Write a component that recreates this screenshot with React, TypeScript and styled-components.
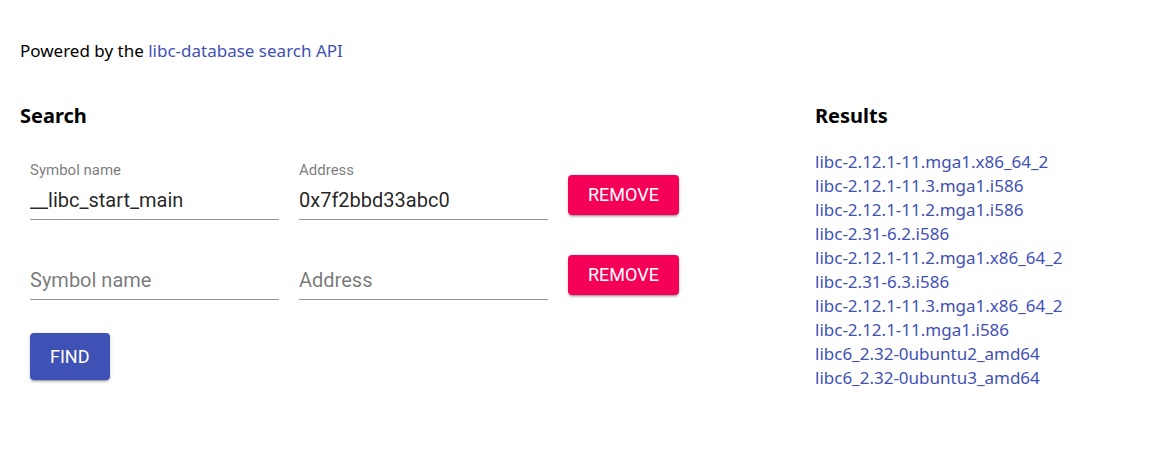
import styled, { createGlobalStyle } from 'styled-components'

const GlobalStyle = createGlobalStyle`
  body {
    margin: 0;
    background: #fff;
    font-family: 'Noto Sans', 'Open Sans', sans-serif;
    color: #000;
  }
`

const RESULTS = [
  'libc-2.12.1-11.mga1.x86_64_2',
  'libc-2.12.1-11.3.mga1.i586',
  'libc-2.12.1-11.2.mga1.i586',
  'libc-2.31-6.2.i586',
  'libc-2.12.1-11.2.mga1.x86_64_2',
  'libc-2.31-6.3.i586',
  'libc-2.12.1-11.3.mga1.x86_64_2',
  'libc-2.12.1-11.mga1.i586',
  'libc6_2.32-0ubuntu2_amd64',
  'libc6_2.32-0ubuntu3_amd64',
]

const QUERIES = [
  { symbol: '__libc_start_main', address: '0x7f2bbd33abc0' },
  { symbol: '', address: '' },
]

const Page = styled.main`
  padding: 39px 20px 20px;
`
const Intro = styled.p`
  margin: 0 0 41px;
  font-size: 17px;
  line-height: 24px;
`
const Link = styled.a`
  color: #3f51b5;
  text-decoration: none;
`
const Columns = styled.div`
  display: grid;
  grid-template-columns: 795px 1fr;
`
const Heading = styled.h2`
  margin: 0 0 22px;
  font-size: 20px;
  line-height: 24px;
  font-weight: 700;
`
const Form = styled.form`
  display: flex;
  flex-direction: column;
  align-items: flex-start;
  gap: 21px;
  padding: 11px 0 0 10px;
`
const Row = styled.div`
  display: flex;
  align-items: flex-end;
  gap: 20px;
`
const Field = styled.label`
  display: flex;
  flex-direction: column;
  width: 249px;
  font-family: Roboto, sans-serif;
`
const FieldLabel = styled.span`
  height: 18px;
  font-size: 15px;
  line-height: 18px;
  color: rgba(0, 0, 0, 0.54);
`
const Input = styled.input`
  box-sizing: border-box;
  width: 100%;
  height: 41px;
  margin: 0;
  padding: 9px 0 7px;
  border: 0;
  border-bottom: 1px solid rgba(0, 0, 0, 0.42);
  outline: none;
  background: transparent;
  font-family: Roboto, sans-serif;
  font-size: 20px;
  line-height: 24px;
  color: rgba(0, 0, 0, 0.87);
  &::placeholder {
    color: rgba(0, 0, 0, 0.54);
    opacity: 1;
  }
`
const Button = styled.button<{ $tone: 'primary' | 'secondary'; $tall?: boolean }>`
  box-sizing: border-box;
  height: ${(p) => (p.$tall ? '47px' : '40px')};
  padding: 0 20px;
  border: 0;
  border-radius: 4px;
  background: ${(p) => (p.$tone === 'primary' ? '#3f51b5' : '#f50057')};
  color: #fff;
  font-family: Roboto, sans-serif;
  font-size: 18px;
  font-weight: 400;
  line-height: 24px;
  text-transform: uppercase;
  cursor: pointer;
  box-shadow: 0 3px 1px -2px rgba(0, 0, 0, 0.2), 0 2px 2px 0 rgba(0, 0, 0, 0.14),
    0 1px 5px 0 rgba(0, 0, 0, 0.12);
`
const RemoveButton = styled(Button)`
  margin-bottom: 5px;
`
const FindButton = styled(Button)`
  margin-top: 12px;
`
const ResultList = styled.ul`
  margin: 0;
  padding: 0;
  list-style: none;
  font-size: 17px;
  line-height: 24px;
`

export default function App() {
  return (
    <>
      <GlobalStyle />
      <Page>
        <Intro>
          Powered by the <Link href="#">libc-database search API</Link>
        </Intro>
        <Columns>
          <section>
            <Heading>Search</Heading>
            <Form onSubmit={(e) => e.preventDefault()}>
              {QUERIES.map((q, i) => (
                <Row key={i}>
                  <Field>
                    <FieldLabel>{q.symbol ? 'Symbol name' : ''}</FieldLabel>
                    <Input defaultValue={q.symbol} placeholder="Symbol name" />
                  </Field>
                  <Field>
                    <FieldLabel>{q.address ? 'Address' : ''}</FieldLabel>
                    <Input defaultValue={q.address} placeholder="Address" />
                  </Field>
                  <RemoveButton type="button" $tone="secondary">
                    Remove
                  </RemoveButton>
                </Row>
              ))}
              <FindButton type="submit" $tone="primary" $tall>
                Find
              </FindButton>
            </Form>
          </section>
          <section>
            <Heading>Results</Heading>
            <ResultList>
              {RESULTS.map((r) => (
                <li key={r}>
                  <Link href="#">{r}</Link>
                </li>
              ))}
            </ResultList>
          </section>
        </Columns>
      </Page>
    </>
  )
}
